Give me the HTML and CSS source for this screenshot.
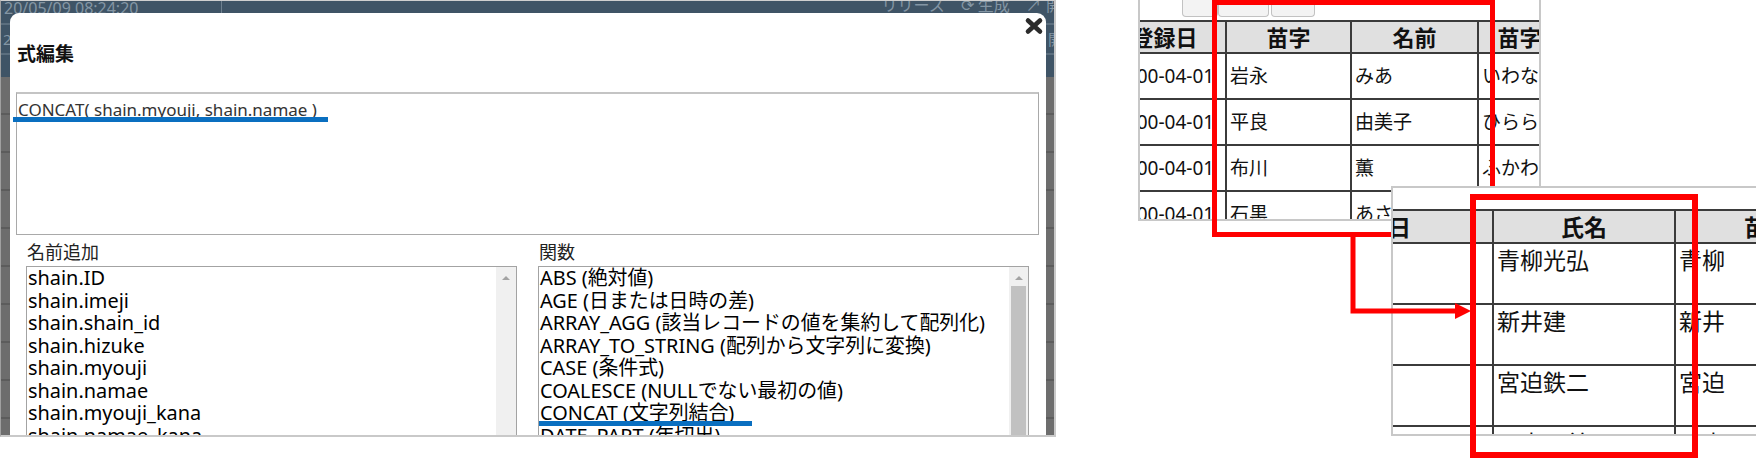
FILE: index.html
```html
<!DOCTYPE html>
<html lang="ja">
<head>
<meta charset="utf-8">
<title>式編集</title>
<link rel="stylesheet" href="styles.css">
</head>
<body>
<div class="canvas">

  <div class="app">
    <div class="topbar">
      <span class="tb-date">20/05/09 08:24:20</span>
      <span class="tb-sep"></span>
      <span class="tb-fill"></span>
      <span class="tb-item">リリース</span>
      <span class="tb-item">⟳ 生成</span>
      <span class="tb-item">↗ 開</span>
    </div>
    <div class="row2"><span>2</span><span class="row2-right">開</span></div>

    <div class="dialog">
      <button class="close" type="button" aria-label="閉じる">
        <svg width="20" height="18" viewBox="0 0 20 18"><path d="M4 3.5 L16 14.5 M16 3.5 L4 14.5" stroke="#2b2b2b" stroke-width="4.6" stroke-linecap="round"/></svg>
      </button>
      <h1 class="title">式編集</h1>
      <div class="editor">CONCAT( shain.myouji, shain.namae )</div>
      <span class="mark mark-editor"></span>

      <div class="pickers">
        <div class="picker picker-names">
          <div class="picker-label">名前追加</div>
          <div class="listbox">
            <ul class="options">
              <li>shain.ID</li>
              <li>shain.imeji</li>
              <li>shain.shain_id</li>
              <li>shain.hizuke</li>
              <li>shain.myouji</li>
              <li>shain.namae</li>
              <li>shain.myouji_kana</li>
              <li>shain.namae_kana</li>
            </ul>
            <div class="scrollbar"><span class="arrow"></span></div>
          </div>
        </div>
        <div class="picker picker-funcs">
          <div class="picker-label">関数</div>
          <div class="listbox">
            <ul class="options">
              <li>ABS (絶対値)</li>
              <li>AGE (日または日時の差)</li>
              <li>ARRAY_AGG (該当レコードの値を集約して配列化)</li>
              <li>ARRAY_TO_STRING (配列から文字列に変換)</li>
              <li>CASE (条件式)</li>
              <li>COALESCE (NULLでない最初の値)</li>
              <li>CONCAT (文字列結合)</li>
              <li>DATE_PART (年切出)</li>
            </ul>
            <div class="scrollbar"><span class="arrow"></span><span class="thumb"></span></div>
            <span class="mark mark-func"></span>
          </div>
        </div>
      </div>
    </div>
  </div>

  <div class="shot shot-a">
    <div class="tabs">
      <span class="tab tab-1"></span>
      <span class="tab tab-2"></span>
      <span class="tab tab-3"></span>
    </div>
    <table class="grid grid-a">
      <colgroup><col class="ca1"><col class="ca2"><col class="ca3"><col class="ca4"></colgroup>
      <thead>
        <tr><th>登録日</th><th>苗字</th><th>名前</th><th>苗字カナ</th></tr>
      </thead>
      <tbody>
        <tr><td class="date">2000-04-01</td><td>岩永</td><td>みあ</td><td>いわなが</td></tr>
        <tr><td class="date">2000-04-01</td><td>平良</td><td>由美子</td><td>ひらら</td></tr>
        <tr><td class="date">2000-04-01</td><td>布川</td><td>薫</td><td>ふかわ</td></tr>
        <tr><td class="date">2000-04-01</td><td>石黒</td><td>あさみ</td><td>いしぐろ</td></tr>
      </tbody>
    </table>
  </div>

  <svg class="overlay overlay-under" width="1756" height="462" viewBox="0 0 1756 462">
    <rect x="1214.5" y="2.5" width="278" height="232" fill="none" stroke="#ff0000" stroke-width="5"/>
  </svg>

  <div class="shot shot-b">
    <div class="strip"></div>
    <table class="grid grid-b">
      <colgroup><col class="cb1"><col class="cb2"><col class="cb3"></colgroup>
      <thead>
        <tr><th>登録日</th><th>氏名</th><th>苗字</th></tr>
      </thead>
      <tbody>
        <tr><td></td><td>青柳光弘</td><td>青柳</td></tr>
        <tr><td></td><td>新井建</td><td>新井</td></tr>
        <tr><td></td><td>宮迫鉄二</td><td>宮迫</td></tr>
        <tr><td></td><td>日高正美</td><td>日高</td></tr>
      </tbody>
    </table>
  </div>

  <svg class="overlay overlay-top" width="1756" height="462" viewBox="0 0 1756 462">
    <rect x="1473" y="197" width="222" height="258" fill="none" stroke="#ff0000" stroke-width="6"/>
    <path d="M1353 232 V311 H1458" fill="none" stroke="#ff0000" stroke-width="5"/>
    <polygon points="1455,303 1471,311 1455,319" fill="#ff0000"/>
  </svg>

</div>
</body>
</html>
```

FILE: styles.css
```css
* { box-sizing: border-box; margin: 0; padding: 0; }

html, body {
  width: 1756px;
  height: 462px;
  overflow: hidden;
  background: #ffffff;
}

body {
  font-family: "Noto Sans", "Noto Sans CJK JP", sans-serif;
  color: #000;
}

.canvas {
  position: relative;
  width: 1756px;
  height: 462px;
}

/* ---------- left screenshot: expression editor dialog ---------- */
.app {
  position: absolute;
  left: 0;
  top: 0;
  width: 1056px;
  height: 437px;
  overflow: hidden;
  border-top: 1px solid #cfcfcf;
  border-right: 2px solid #c9c9c9;
  border-bottom: 2px solid #c9c9c9;
  border-left: 1px solid #a0a0a0;
  background:
    linear-gradient(#3f5466 0 22px, #5b6e7e 22px 24px, #3f5466 24px 52px, #5b6e7e 52px 54px, #3f5466 54px 76px, transparent 76px),
    repeating-linear-gradient(#6d6d6d 0 36px, #5c5c5c 36px 38px);
}

.topbar {
  display: flex;
  align-items: flex-start;
  height: 22px;
  font-size: 16px;
  line-height: 20px;
  color: #8496a4;
  white-space: nowrap;
}

.tb-date { padding-left: 3px; margin-top: -3px; }
.tb-sep { width: 1px; height: 14px; background: #6f8190; margin-left: 83px; }
.tb-fill { flex: 1; }
.tb-item { margin-left: 16px; margin-top: -6px; }
.tb-item:last-child { margin-right: -8px; }

.row2 {
  display: flex;
  justify-content: space-between;
  height: 30px;
  padding: 8px 0 0 2px;
  font-size: 15px;
  line-height: 16px;
  color: #8496a4;
}
.row2-right { margin-right: -9px; }

.dialog {
  position: absolute;
  left: 9px;
  top: 12px;
  width: 1036px;
  bottom: -12px;
  background: #fff;
  border-radius: 9px 9px 0 0;
  padding: 29px 0 0 6px;
}

.close {
  position: absolute;
  right: 2px;
  top: 4px;
  width: 20px;
  height: 18px;
  border: 0;
  background: none;
  display: block;
}
.close svg { display: block; }

.title {
  font-size: 19px;
  font-weight: 700;
  line-height: 24px;
  padding-left: 1px;
  color: #111;
}

.editor {
  margin-top: 26px;
  width: 1023px;
  height: 143px;
  border: 1px solid #a9a9a9;
  border-top: 2px solid #c4c4c4;
  padding: 6px 1px 0;
  font-size: 17px;
  line-height: 20px;
  color: #333;
  white-space: nowrap;
}

.mark {
  position: absolute;
  display: block;
  height: 5px;
  background: #0a6fc0;
}
.mark-editor { left: 3px; top: 104px; width: 315px; }

.pickers {
  display: flex;
  gap: 21px;
  padding-left: 10px;
  margin-top: 6px;
}

.picker-names { width: 491px; }
.picker-funcs { width: 491px; }

.picker-label {
  font-size: 18px;
  line-height: 22px;
  padding-left: 1px;
  color: #222;
}

.listbox {
  position: relative;
  margin-top: 3px;
  height: 200px;
  display: flex;
  border: 1px solid #a3a3a3;
  background: #fff;
}

.options {
  flex: 1;
  list-style: none;
  overflow: hidden;
  font-size: 19.9px;
  line-height: 22.5px;
  padding-left: 1px;
  white-space: nowrap;
  color: #000;
}

.scrollbar {
  width: 20px;
  display: flex;
  flex-direction: column;
  align-items: center;
  background: #f0f0f0;
}
.picker-funcs .scrollbar { width: 19px; }

.arrow {
  display: block;
  width: 0;
  height: 0;
  margin-top: 9px;
  border-left: 4px solid transparent;
  border-right: 4px solid transparent;
  border-bottom: 4px solid #a3a3a3;
}

.thumb {
  display: block;
  width: 15px;
  flex: 1;
  margin-top: 6px;
  background: #c1c1c1;
}

.mark-func { left: 0; top: 154px; width: 213px; }

/* ---------- right screenshots: tables ---------- */
.shot {
  position: absolute;
  background: #fff;
  overflow: hidden;
  border: 2px solid #c8c8c8;
}

.shot-a {
  left: 1138px;
  top: 0;
  width: 403px;
  height: 221px;
  border-top: 0;
}

.tabs {
  display: flex;
  height: 20px;
  padding-left: 42px;
}
.tab {
  display: block;
  height: 17px;
  background: #f3f3f3;
  border: 1px solid #c2c2c2;
  border-top: 0;
  border-radius: 0 0 4px 4px;
}
.tab-1 { width: 36px; }
.tab-2 { width: 51px; }
.tab-3 { width: 44px; margin-left: 2px; }

.grid {
  border-collapse: collapse;
  table-layout: fixed;
  color: #111;
}
.grid th, .grid td {
  border: 2px solid #3b3b3b;
  white-space: nowrap;
  overflow: hidden;
}
.grid th {
  background: #e0e0e0;
  font-weight: 700;
  text-align: center;
  padding: 0;
}

.grid-a { margin-left: -38px; width: 502px; }
.ca1 { width: 123px; }
.ca2 { width: 125px; }
.ca3 { width: 127px; }
.ca4 { width: 127px; }
.grid-a th { height: 32px; font-size: 22px; line-height: 28px; }
.grid-a td {
  height: 46px;
  font-size: 19px;
  line-height: 24px;
  padding: 0 3px;
  vertical-align: middle;
}
.grid-a td.date { padding-left: 11px; }

.shot-b {
  left: 1391px;
  top: 186px;
  width: 367px;
  height: 250px;
}

.strip { height: 21px; }

.grid-b { margin-left: -134px; width: 599px; }
.cb1 { width: 233px; }
.cb2 { width: 182px; }
.cb3 { width: 184px; }
.grid-b th { height: 33px; font-size: 23px; line-height: 28px; }
.grid-b td {
  height: 61px;
  font-size: 23px;
  line-height: 28px;
  padding: 2px 3px 0;
  vertical-align: top;
}

.overlay {
  position: absolute;
  left: 0;
  top: 0;
  display: block;
  pointer-events: none;
}
```
